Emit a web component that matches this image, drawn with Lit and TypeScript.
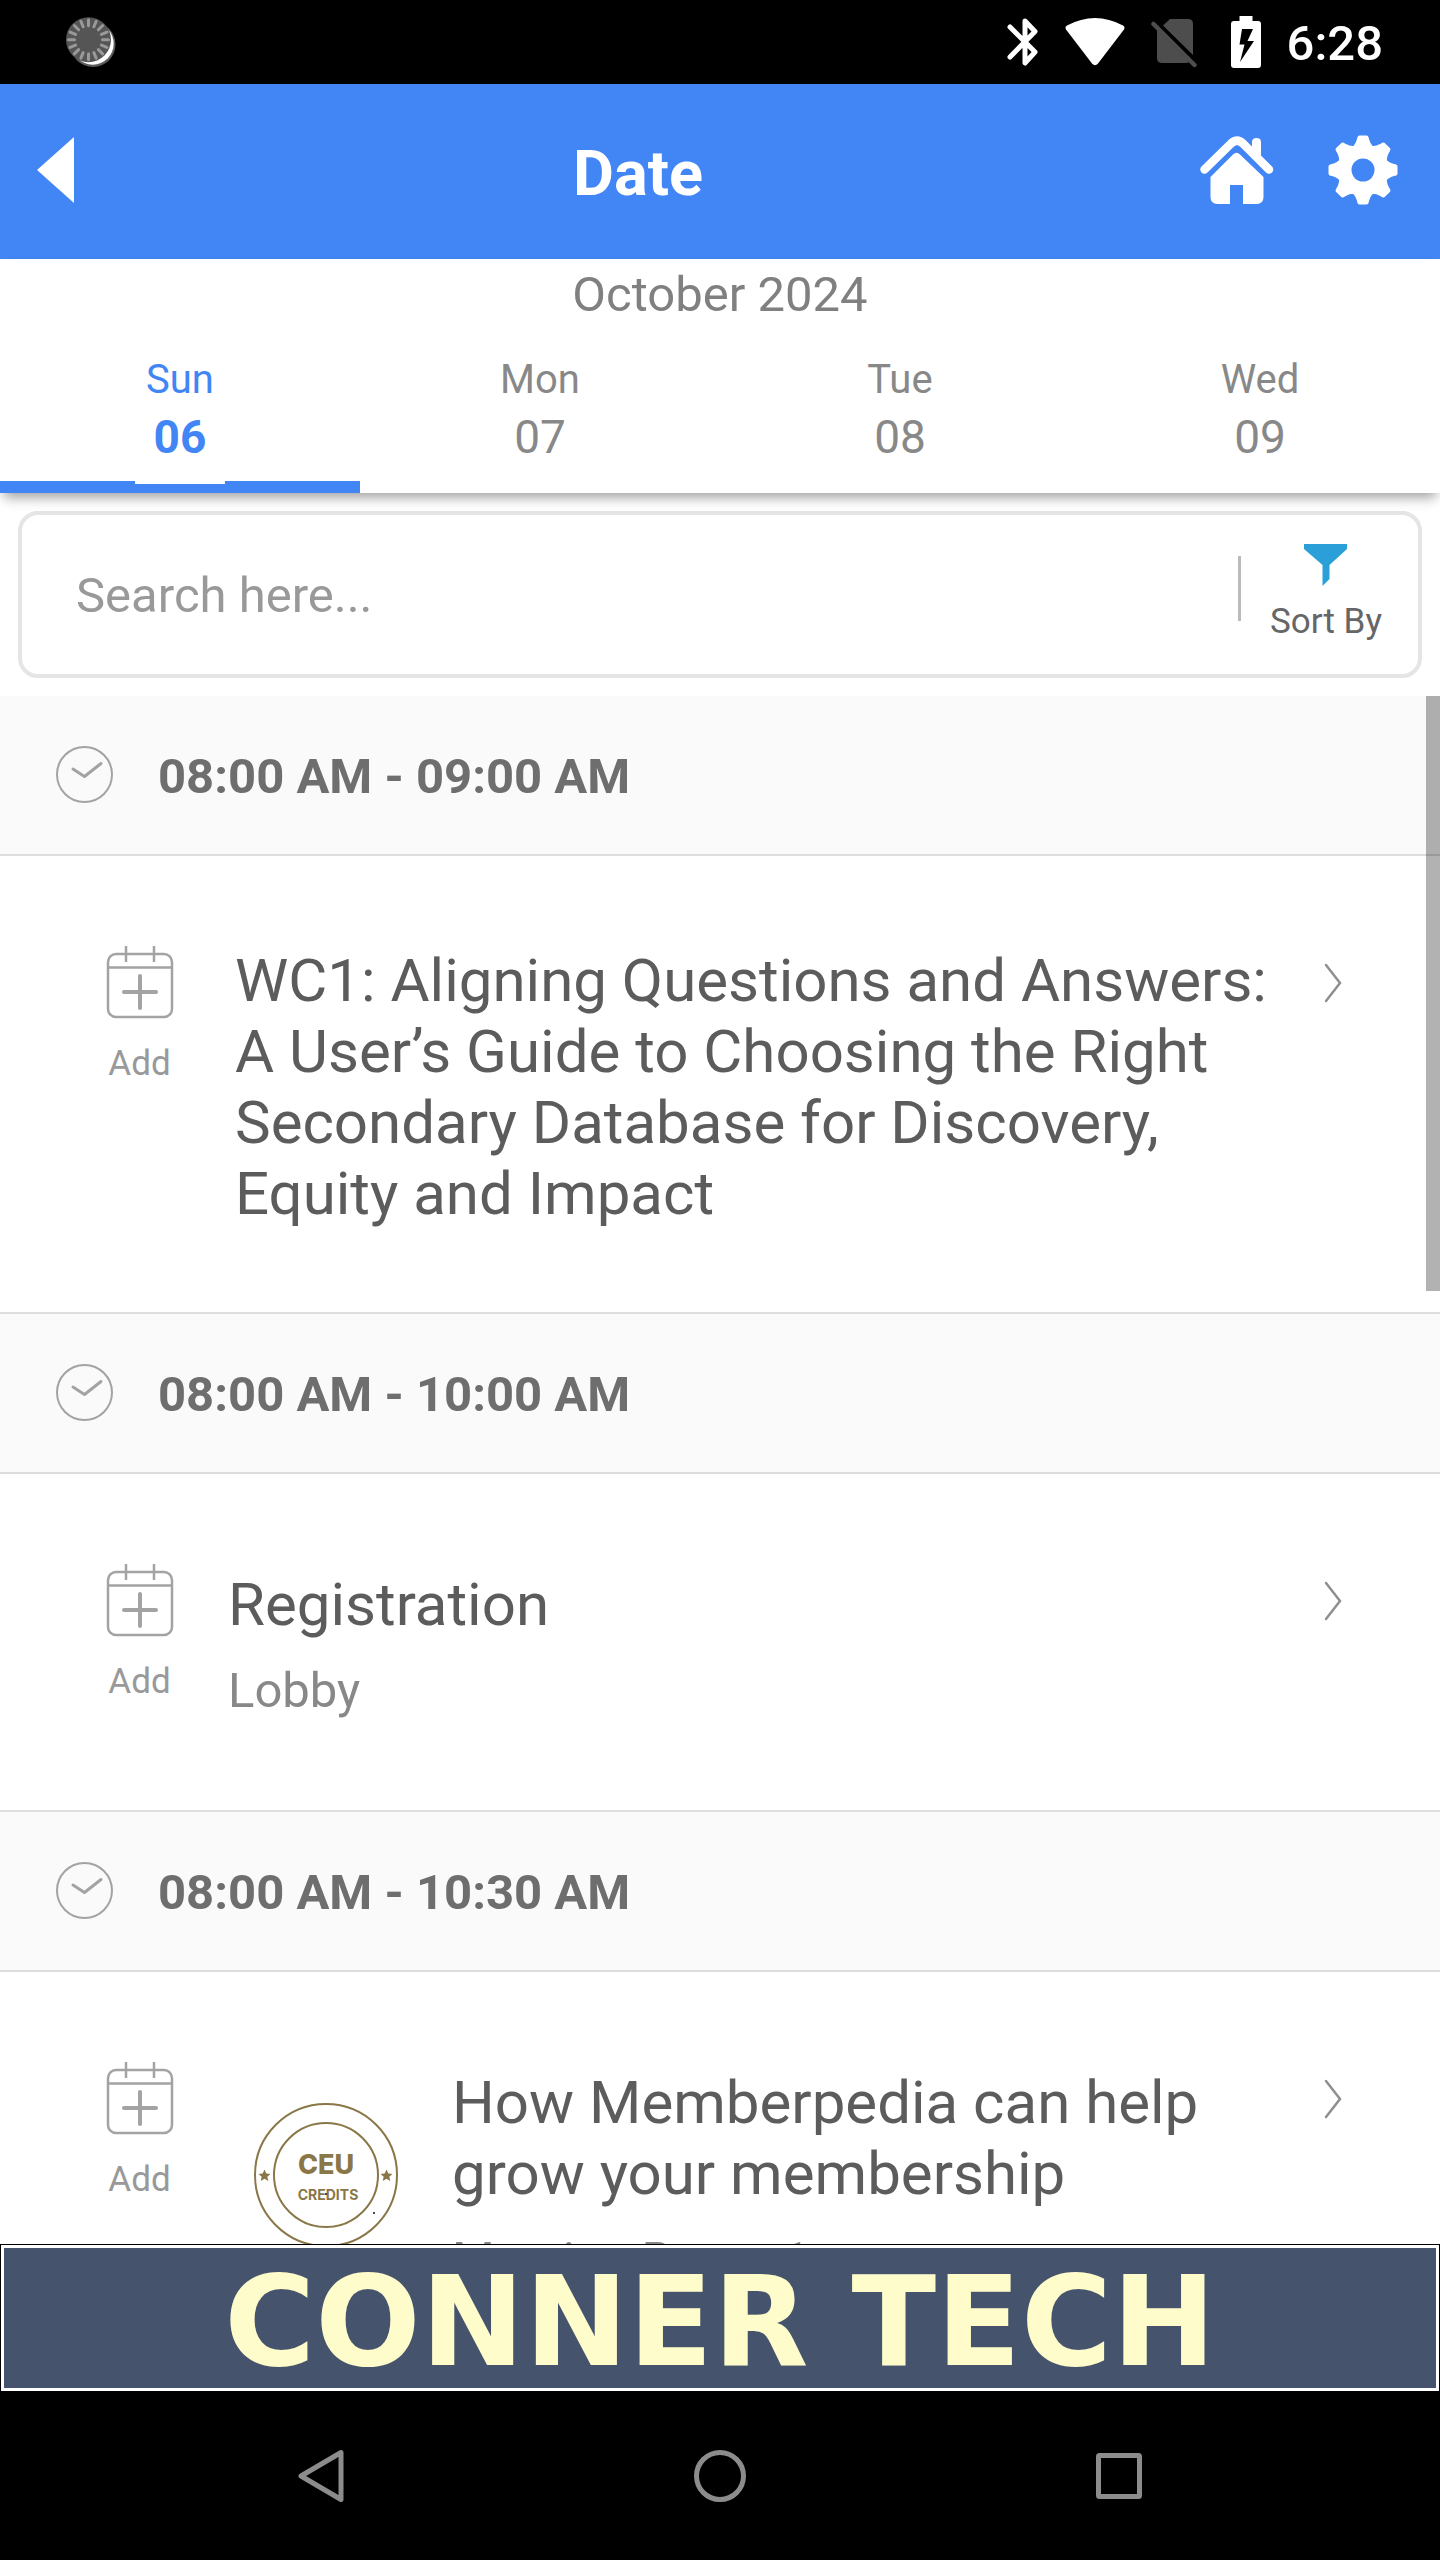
import { LitElement, html, css, svg, nothing } from 'lit';
import { customElement, property, state } from 'lit/decorators.js';
import { classMap } from 'lit/directives/class-map.js';

interface Session {
  title: string;
  location?: string;
  credits?: boolean;
}

interface Slot {
  time: string;
  sessions: Session[];
}

const DAYS = [
  { name: 'Sun', date: '06' },
  { name: 'Mon', date: '07' },
  { name: 'Tue', date: '08' },
  { name: 'Wed', date: '09' }
];

const SLOTS: Slot[] = [
  {
    time: '08:00 AM - 09:00 AM',
    sessions: [
      {
        title:
          'WC1: Aligning Questions and Answers: A User’s Guide to Choosing the Right Secondary Database for Discovery, Equity and Impact'
      }
    ]
  },
  {
    time: '08:00 AM - 10:00 AM',
    sessions: [{ title: 'Registration', location: 'Lobby' }]
  },
  {
    time: '08:00 AM - 10:30 AM',
    sessions: [
      {
        title: 'How Memberpedia can help grow your membership',
        location: 'Meeting Room 1',
        credits: true
      }
    ]
  }
];

@customElement('status-bar')
export class StatusBar extends LitElement {
  static styles = css`
    :host {
      display: flex;
      align-items: center;
      justify-content: space-between;
      height: 84px;
      padding: 0 57px 0 64px;
      background: #000;
      color: #fff;
    }

    svg {
      display: block;
    }

    .icons {
      display: flex;
      align-items: center;
      gap: 26px;
    }

    .battery {
      margin-left: 8px;
    }

    .time {
      padding-top: 4px;
      font-size: 49px;
      font-weight: 500;
      line-height: 56px;
    }
  `;

  render() {
    // 16 short ticks around the spinner disc
    const ticks = Array.from({ length: 16 }, (_, i) => i * 22.5);
    return html`
      <svg width="54" height="52" viewBox="0 0 54 52" aria-hidden="true">
        <circle cx="29" cy="28.5" r="22.5" fill="#5c5c5c" />
        <circle cx="28.7" cy="27.7" r="21" fill="#fff" />
        <circle cx="24.5" cy="23.7" r="22.5" fill="#555" />
        ${ticks.map(
          (angle) => svg`<path
            d="M24.5 3.7v6"
            stroke="#999"
            stroke-width="3"
            stroke-linecap="round"
            transform="rotate(${angle} 24.5 23.7)"
          />`
        )}
      </svg>
      <div class="icons">
        <svg width="32" height="52" viewBox="0 0 32 52" aria-hidden="true">
          <path
            d="M3 11 28 36 18 47V5L28 15.5 3 41"
            fill="none"
            stroke="#fff"
            stroke-width="5"
            stroke-linecap="round"
            stroke-linejoin="round"
          />
        </svg>
        <svg width="60" height="52" viewBox="0 0 60 52" aria-hidden="true">
          <path d="M1 13.5Q-.5 11 2 9.5Q30-5.500 58 9.5Q60.5 11 59 13.5L33 47.5Q30 51 27 47.5Z" fill="#fff" />
        </svg>
        <svg width="46" height="52" viewBox="0 0 46 52" aria-hidden="true">
          <path d="M12 9.5 19 3h18q5 0 5 5v31Z" fill="#4d4d4d" />
          <path d="M6 13 38 46Q37 47 35 47H11q-5 0-5-5Z" fill="#4d4d4d" />
          <path d="M2.5 8 43.5 49" stroke="#4d4d4d" stroke-width="4.5" stroke-linecap="round" />
        </svg>
        <svg class="battery" width="30" height="52" viewBox="0 0 30 52" aria-hidden="true">
          <path d="M8.5 0h13v5H27q3 0 3 3v41q0 3-3 3H3q-3 0-3-3V8q0-3 3-3h5.5Z" fill="#fff" />
          <path d="M11 13h11l-5.5 12H23L9 46l4.5-17.5H8.5Z" fill="#000" />
        </svg>
        <span class="time">6:28</span>
      </div>
    `;
  }
}

@customElement('session-row')
export class SessionRow extends LitElement {
  @property({ attribute: false }) session!: Session;

  static styles = css`
    :host {
      display: flex;
      align-items: flex-start;
      padding: 89px 96px 83px 88px;
      background: #fff;
    }

    svg {
      display: block;
    }

    .add {
      flex: none;
      display: flex;
      flex-direction: column;
      align-items: center;
      gap: 25px;
      width: 103px;
      padding: 0;
      border: none;
      background: none;
      font: inherit;
      font-size: 35px;
      line-height: 40px;
      color: #999;
      cursor: pointer;
    }

    .link {
      flex: 1;
      display: flex;
      align-items: flex-start;
      padding-left: 44px;
      color: inherit;
      text-decoration: none;
    }

    .link.located {
      padding-left: 37px;
    }

    .seal {
      flex: none;
      margin: 42px 54px 0 26px;
    }

    .body {
      flex: 1;
    }

    .located .body {
      padding: 6px 0 8px;
    }

    .title {
      margin: 0;
      font-size: 60px;
      font-weight: 400;
      line-height: 71px;
      color: #5c5c5c;
    }

    .location {
      margin: 23px 0 0;
      font-size: 49px;
      line-height: 56px;
      color: #888;
    }

    .chevron {
      flex: none;
      margin: 18px 0 0 34px;
    }
  `;

  _renderSeal() {
    const star =
      'M0-6 1.8-2 6-1.6 2.8 1.2 3.8 5.5 0 3.2-3.8 5.5-2.8 1.2-6-1.6-1.8-2Z';
    return html`
      <svg class="seal" width="144" height="144" viewBox="0 0 144 144" role="img" aria-label="CEU credits">
        <g fill="none" stroke="#8a7747" stroke-width="2">
          <circle cx="72" cy="72" r="71" />
          <circle cx="72" cy="72" r="52" />
        </g>
        <g fill="#8a7747">
          <path d=${star} transform="translate(10.5 72.5)" />
          <path d=${star} transform="translate(132.5 72.5)" />
          <text x="72" y="71" font-family="Inter, sans-serif" font-size="27" font-weight="800" text-anchor="middle">CEU</text>
          <text x="74" y="97" font-family="Inter, sans-serif" font-size="14" font-weight="700" text-anchor="middle">CREDITS</text>
        </g>
        <circle cx="72" cy="91" r="1" fill="#111" />
        <circle cx="120" cy="110" r="1" fill="#111" />
      </svg>
    `;
  }

  render() {
    const { title, location, credits } = this.session;
    return html`
      <button class="add">
        <svg width="68" height="74" viewBox="0 0 68 74" fill="none" stroke="#a3a3a3" aria-hidden="true">
          <rect x="2" y="9" width="64" height="63" rx="8" stroke-width="2.5" />
          <path d="M2 22.5h64M20 1v16M48 1v16" stroke-width="2.5" />
          <path d="M34 31v32M18 47h32" stroke-width="4" stroke-linecap="round" />
        </svg>
        Add
      </button>
      <a class=${classMap({ link: true, located: !!location })} href="#">
        ${credits ? this._renderSeal() : nothing}
        <div class="body">
          <h3 class="title">${title}</h3>
          ${location ? html`<p class="location">${location}</p>` : nothing}
        </div>
        <svg class="chevron" width="20" height="40" viewBox="0 0 20 40" aria-hidden="true">
          <path d="M2 2 16 20 2 38" fill="none" stroke="#8f8f8f" stroke-width="2.5" stroke-linecap="round" />
        </svg>
      </a>
    `;
  }
}

@customElement('app-root')
export class AppRoot extends LitElement {
  @state() _selected = 0;

  static styles = css`
    :host {
      display: flex;
      flex-direction: column;
      height: 100vh;
      background: #fff;
      font-family: Roboto, 'Liberation Sans', sans-serif;
      color: #888;
    }

    svg {
      display: block;
    }

    button {
      padding: 0;
      border: none;
      background: none;
      font: inherit;
      color: inherit;
      cursor: pointer;
    }

    .header {
      box-sizing: border-box;
      display: flex;
      align-items: center;
      justify-content: space-between;
      height: 175px;
      padding: 0 42px 4px 36px;
      background: #4285f4;
      color: #fff;
    }

    .header h1 {
      margin: 0;
      padding-top: 8px;
      font-size: 63px;
      font-weight: 700;
      line-height: 72px;
    }

    .actions {
      display: flex;
      gap: 54px;
    }

    .dates {
      position: relative;
      z-index: 1;
      padding-top: 8px;
      background: #fff;
      box-shadow: 0 8px 12px -4px rgba(0, 0, 0, 0.4);
    }

    .month {
      margin: 0 0 33px;
      font-size: 49px;
      font-weight: 400;
      line-height: 56px;
      text-align: center;
      color: #808080;
    }

    .tabs {
      display: grid;
      grid-template-columns: repeat(4, 1fr);
    }

    .tab {
      display: flex;
      flex-direction: column;
      align-items: center;
      gap: 7px;
    }

    .tab .name {
      font-size: 40px;
      line-height: 47px;
    }

    .tab .date {
      font-size: 46px;
      line-height: 54px;
    }

    .tab::after {
      content: '';
      width: 100%;
      height: 12px;
      margin-top: 10px;
    }

    .tab.selected {
      color: #4285f4;
    }

    .tab.selected .date {
      font-weight: 700;
    }

    .tab.selected::after {
      background: linear-gradient(#fff, #fff) center top / 90px 3px no-repeat #4285f4;
    }

    .search {
      display: flex;
      align-items: center;
      margin: 18px;
      border: 4px solid #e5e5e5;
      border-radius: 20px;
      background: #fff;
    }

    .search input {
      box-sizing: border-box;
      flex: 1;
      min-width: 0;
      height: 159px;
      padding: 2px 20px 0 54px;
      border: none;
      outline: none;
      background: none;
      font: inherit;
      font-size: 49px;
      color: #5c5c5c;
    }

    .search input::placeholder {
      color: #999;
      opacity: 1;
    }

    .sort {
      display: flex;
      align-items: center;
      gap: 29px;
      padding: 0 36px 4px 0;
      font-size: 35px;
      line-height: 40px;
      color: #666;
    }

    .sort::before {
      content: '';
      width: 3px;
      height: 65px;
      margin-bottom: 8px;
      background: #bbb;
    }

    .sort span {
      display: flex;
      flex-direction: column;
      align-items: center;
      gap: 16px;
    }

    .schedule {
      position: relative;
      flex: 1;
      min-height: 0;
    }

    .list {
      height: 100%;
      overflow-y: auto;
      scrollbar-width: none;
    }

    .thumb {
      position: absolute;
      top: 0;
      right: 0;
      width: 14px;
      height: 595px;
      background: rgba(0, 0, 0, 0.3);
    }

    .slot {
      display: flex;
      align-items: center;
      gap: 44px;
      height: 158px;
      margin: 0;
      padding-left: 55px;
      border-top: 2px solid #ddd;
      border-bottom: 2px solid #ddd;
      background: #fafafa;
      font-size: 49px;
      font-weight: 700;
      color: #6e6e6e;
    }

    .slot span {
      padding-top: 3px;
    }

    section:first-child .slot {
      border-top: none;
    }

    .banner {
      padding: 3px;
      border: 1px solid #000;
      background: #fff;
      text-decoration: none;
    }

    .banner span {
      display: block;
      padding-top: 8px;
      background: #46536c;
      font-family: 'DejaVu Sans', sans-serif;
      font-size: 124px;
      font-weight: 700;
      line-height: 132px;
      text-align: center;
      color: #fffccc;
    }

    .nav {
      display: grid;
      grid-template-columns: repeat(3, 1fr);
      height: 168px;
      padding: 0 122px;
      background: #000;
    }

    .nav button {
      display: flex;
      align-items: center;
      justify-content: center;
    }
  `;

  _renderHeader() {
    return html`
      <header class="header">
        <button aria-label="Back">
          <svg width="40" height="66" viewBox="0 0 40 66">
            <path d="M1 33 38 0v66Z" fill="#fff" />
          </svg>
        </button>
        <h1>Date</h1>
        <div class="actions">
          <button aria-label="Home">
            <svg width="74" height="70" viewBox="0 0 74 70" fill="#fff">
              <path d="M52 20V7q0-4 4.5-4T61 7v15Z" />
              <path d="M4.5 34.5 31 8.5Q37 3 43 8.5L69 34.5" fill="none" stroke="#fff" stroke-width="8.5" stroke-linecap="round" />
              <path d="M33 19.5Q36.5 16 40 19.5L63.5 42V62q0 7-7 7H43V50H30V69H17.5q-7 0-7-7V42Z" />
            </svg>
          </button>
          <button aria-label="Settings">
            <svg width="70" height="70" viewBox="-35 -35 70 70">
              <g fill="#fff">
                ${[0, 45, 90, 135, 180, 225, 270, 315].map(
                  (angle) => svg`<path
                    d="M-13-21Q-7.5-25-6-31Q-5.5-34.5-3.5-34.5H3.5Q5.5-34.5 6-31Q7.5-25 13-21L8 0H-8Z"
                    transform="rotate(${angle})"
                  />`
                )}
              </g>
              <circle r="18" fill="none" stroke="#fff" stroke-width="13" />
              <circle r="11.5" fill="#4285f4" />
            </svg>
          </button>
        </div>
      </header>
    `;
  }

  _renderDates() {
    return html`
      <div class="dates">
        <h2 class="month">October 2024</h2>
        <div class="tabs" role="tablist">
          ${DAYS.map(
            (day, i) => html`
              <button
                class=${classMap({ tab: true, selected: i === this._selected })}
                role="tab"
                aria-selected=${i === this._selected}
                @click=${() => (this._selected = i)}
              >
                <span class="name">${day.name}</span>
                <span class="date">${day.date}</span>
              </button>
            `
          )}
        </div>
      </div>
    `;
  }

  _renderSlot(slot: Slot) {
    return html`
      <section>
        <h2 class="slot">
          <svg width="59" height="59" viewBox="0 0 59 59" fill="none" stroke="#a3a3a3" aria-hidden="true">
            <circle cx="29.5" cy="28.5" r="27.5" stroke-width="2" />
            <path d="M18 23 29.5 30.5 46 17.5" stroke-width="3" stroke-linecap="round" stroke-linejoin="round" />
          </svg>
          <span>${slot.time}</span>
        </h2>
        ${slot.sessions.map((session) => html`<session-row .session=${session}></session-row>`)}
      </section>
    `;
  }

  render() {
    return html`
      <status-bar></status-bar>
      ${this._renderHeader()}
      ${this._renderDates()}
      <div class="search">
        <input type="text" placeholder="Search here..." aria-label="Search sessions" />
        <button class="sort">
          <span>
            <svg width="44" height="42" viewBox="0 0 44 42" aria-hidden="true">
              <path d="M0 0h43v5L25.5 21v14L18.5 42V21L0 5Z" fill="#2a9fd8" />
            </svg>
            Sort By
          </span>
        </button>
      </div>
      <main class="schedule">
        <div class="list">${SLOTS.map((slot) => this._renderSlot(slot))}</div>
        <div class="thumb"></div>
      </main>
      <a class="banner" href="#"><span>CONNER TECH</span></a>
      <nav class="nav">
        <button aria-label="Back">
          <svg width="52" height="56" viewBox="0 0 52 56" fill="none" stroke="#8c8c8c" stroke-width="5" stroke-linejoin="round">
            <path d="M46 4.5V51.5L6 28Z" />
          </svg>
        </button>
        <button aria-label="Home">
          <svg width="56" height="56" viewBox="0 0 56 56" fill="none" stroke="#8c8c8c" stroke-width="5">
            <circle cx="28" cy="28" r="23.5" />
          </svg>
        </button>
        <button aria-label="Overview">
          <svg width="56" height="56" viewBox="0 0 56 56" fill="none" stroke="#8c8c8c" stroke-width="5">
            <rect x="7.5" y="7.5" width="41" height="41" rx="1" />
          </svg>
        </button>
      </nav>
    `;
  }
}
